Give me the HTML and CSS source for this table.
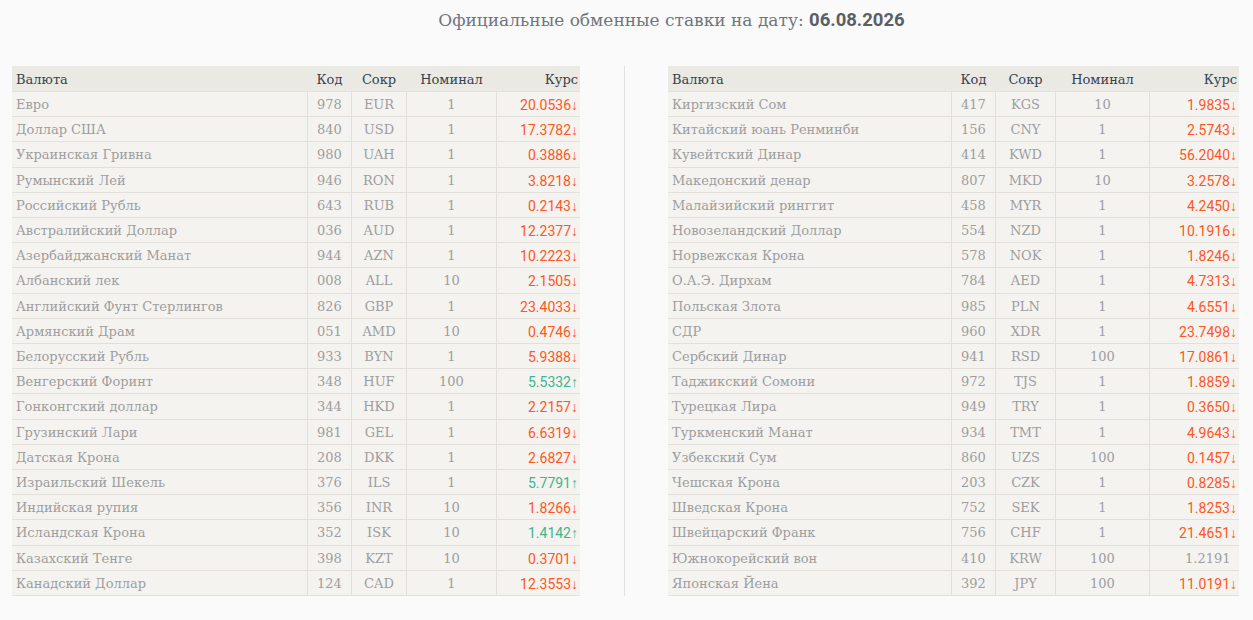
FILE: index.html
```html
<!DOCTYPE html>
<html lang="ru">
<head>
<meta charset="utf-8">
<title>Официальные обменные ставки</title>
<link rel="stylesheet" href="styles.css">
</head>
<body>
<h1 class="title">Официальные обменные ставки на дату: <b class="date">06.08.2026</b></h1>
<div class="tables">
  <table class="rates rates-left">
    <colgroup><col class="c-name"><col class="c-code"><col class="c-abbr"><col class="c-nom"><col class="c-rate"></colgroup>
    <thead><tr><th class="name">Валюта</th><th>Код</th><th>Сокр</th><th>Номинал</th><th class="rate">Курс</th></tr></thead>
    <tbody>
      <tr><td class="name">Евро</td><td>978</td><td>EUR</td><td>1</td><td class="rate down">20.0536↓</td></tr>
      <tr><td class="name">Доллар США</td><td>840</td><td>USD</td><td>1</td><td class="rate down">17.3782↓</td></tr>
      <tr><td class="name">Украинская Гривна</td><td>980</td><td>UAH</td><td>1</td><td class="rate down">0.3886↓</td></tr>
      <tr><td class="name">Румынский Лей</td><td>946</td><td>RON</td><td>1</td><td class="rate down">3.8218↓</td></tr>
      <tr><td class="name">Российский Рубль</td><td>643</td><td>RUB</td><td>1</td><td class="rate down">0.2143↓</td></tr>
      <tr><td class="name">Австралийский Доллар</td><td>036</td><td>AUD</td><td>1</td><td class="rate down">12.2377↓</td></tr>
      <tr><td class="name">Азербайджанский Манат</td><td>944</td><td>AZN</td><td>1</td><td class="rate down">10.2223↓</td></tr>
      <tr><td class="name">Албанский лек</td><td>008</td><td>ALL</td><td>10</td><td class="rate down">2.1505↓</td></tr>
      <tr><td class="name">Английский Фунт Стерлингов</td><td>826</td><td>GBP</td><td>1</td><td class="rate down">23.4033↓</td></tr>
      <tr><td class="name">Армянский Драм</td><td>051</td><td>AMD</td><td>10</td><td class="rate down">0.4746↓</td></tr>
      <tr><td class="name">Белорусский Рубль</td><td>933</td><td>BYN</td><td>1</td><td class="rate down">5.9388↓</td></tr>
      <tr><td class="name">Венгерский Форинт</td><td>348</td><td>HUF</td><td>100</td><td class="rate up">5.5332↑</td></tr>
      <tr><td class="name">Гонконгский доллар</td><td>344</td><td>HKD</td><td>1</td><td class="rate down">2.2157↓</td></tr>
      <tr><td class="name">Грузинский Лари</td><td>981</td><td>GEL</td><td>1</td><td class="rate down">6.6319↓</td></tr>
      <tr><td class="name">Датская Крона</td><td>208</td><td>DKK</td><td>1</td><td class="rate down">2.6827↓</td></tr>
      <tr><td class="name">Израильский Шекель</td><td>376</td><td>ILS</td><td>1</td><td class="rate up">5.7791↑</td></tr>
      <tr><td class="name">Индийская рупия</td><td>356</td><td>INR</td><td>10</td><td class="rate down">1.8266↓</td></tr>
      <tr><td class="name">Исландская Крона</td><td>352</td><td>ISK</td><td>10</td><td class="rate up">1.4142↑</td></tr>
      <tr><td class="name">Казахский Тенге</td><td>398</td><td>KZT</td><td>10</td><td class="rate down">0.3701↓</td></tr>
      <tr><td class="name">Канадский Доллар</td><td>124</td><td>CAD</td><td>1</td><td class="rate down">12.3553↓</td></tr>
    </tbody>
  </table>
  <div class="divider"></div>
  <table class="rates rates-right">
    <colgroup><col class="c-name"><col class="c-code"><col class="c-abbr"><col class="c-nom"><col class="c-rate"></colgroup>
    <thead><tr><th class="name">Валюта</th><th>Код</th><th>Сокр</th><th>Номинал</th><th class="rate">Курс</th></tr></thead>
    <tbody>
      <tr><td class="name">Киргизский Сом</td><td>417</td><td>KGS</td><td>10</td><td class="rate down">1.9835↓</td></tr>
      <tr><td class="name">Китайский юань Ренминби</td><td>156</td><td>CNY</td><td>1</td><td class="rate down">2.5743↓</td></tr>
      <tr><td class="name">Кувейтский Динар</td><td>414</td><td>KWD</td><td>1</td><td class="rate down">56.2040↓</td></tr>
      <tr><td class="name">Македонский денар</td><td>807</td><td>MKD</td><td>10</td><td class="rate down">3.2578↓</td></tr>
      <tr><td class="name">Малайзийский ринггит</td><td>458</td><td>MYR</td><td>1</td><td class="rate down">4.2450↓</td></tr>
      <tr><td class="name">Новозеландский Доллар</td><td>554</td><td>NZD</td><td>1</td><td class="rate down">10.1916↓</td></tr>
      <tr><td class="name">Норвежская Крона</td><td>578</td><td>NOK</td><td>1</td><td class="rate down">1.8246↓</td></tr>
      <tr><td class="name">О.А.Э. Дирхам</td><td>784</td><td>AED</td><td>1</td><td class="rate down">4.7313↓</td></tr>
      <tr><td class="name">Польская Злота</td><td>985</td><td>PLN</td><td>1</td><td class="rate down">4.6551↓</td></tr>
      <tr><td class="name">СДР</td><td>960</td><td>XDR</td><td>1</td><td class="rate down">23.7498↓</td></tr>
      <tr><td class="name">Сербский Динар</td><td>941</td><td>RSD</td><td>100</td><td class="rate down">17.0861↓</td></tr>
      <tr><td class="name">Таджикский Сомони</td><td>972</td><td>TJS</td><td>1</td><td class="rate down">1.8859↓</td></tr>
      <tr><td class="name">Турецкая Лира</td><td>949</td><td>TRY</td><td>1</td><td class="rate down">0.3650↓</td></tr>
      <tr><td class="name">Туркменский Манат</td><td>934</td><td>TMT</td><td>1</td><td class="rate down">4.9643↓</td></tr>
      <tr><td class="name">Узбекский Сум</td><td>860</td><td>UZS</td><td>100</td><td class="rate down">0.1457↓</td></tr>
      <tr><td class="name">Чешская Крона</td><td>203</td><td>CZK</td><td>1</td><td class="rate down">0.8285↓</td></tr>
      <tr><td class="name">Шведская Крона</td><td>752</td><td>SEK</td><td>1</td><td class="rate down">1.8253↓</td></tr>
      <tr><td class="name">Швейцарский Франк</td><td>756</td><td>CHF</td><td>1</td><td class="rate down">21.4651↓</td></tr>
      <tr><td class="name">Южнокорейский вон</td><td>410</td><td>KRW</td><td>100</td><td class="rate same">1.2191<span class="ghost">↓</span></td></tr>
      <tr><td class="name">Японская Йена</td><td>392</td><td>JPY</td><td>100</td><td class="rate down">11.0191↓</td></tr>
    </tbody>
  </table>
</div>
</body>
</html>
```
FILE: styles.css
```css
html, body {
  margin: 0;
  padding: 0;
  background: #fafafa;
}
body {
  font-family: "DejaVu Serif", serif;
  color: #9e9e9e;
}
.title {
  margin: 0;
  padding: 8px 0 0 90px;
  height: 58px;
  box-sizing: border-box;
  text-align: center;
  font-size: 17px;
  line-height: 24px;
  font-weight: normal;
  color: #6d7581;
}
.date {
  font-family: Roboto, "Liberation Sans", sans-serif;
  font-size: 18.5px;
  font-weight: bold;
  color: #5a5f66;
}
.tables {
  display: flex;
  align-items: stretch;
  padding: 8px 0 0 12px;
}
.divider {
  width: 1px;
  background: #e4e2de;
  margin: 0 43px 0 44px;
}
.rates {
  border-collapse: collapse;
  table-layout: fixed;
  font-size: 13px;
}
.rates-left { width: 568px; }
.rates-right { width: 571px; }
.rates-left .c-name { width: 295px; }
.rates-left .c-code { width: 44px; }
.rates-left .c-abbr { width: 55px; }
.rates-left .c-nom { width: 90px; }
.rates-left .c-rate { width: 84px; }
.rates-right .c-name { width: 283px; }
.rates-right .c-code { width: 44px; }
.rates-right .c-abbr { width: 60px; }
.rates-right .c-nom { width: 94px; }
.rates-right .c-rate { width: 90px; }
.rates th {
  background: #ebe9e4;
  color: #37434e;
  font-weight: normal;
  text-align: center;
  padding: 3px 3px 1px 4px;
  line-height: 21px;
  border-bottom: 1px solid #e6e3de;
}
.rates td {
  background: #f4f3f0;
  text-align: center;
  padding: 3px 3px 1px 4px;
  line-height: 20.2px;
  border-bottom: 1px solid #e3e0db;
  border-left: 1px solid #e3e0db;
  white-space: nowrap;
}
.rates td.name,
.rates th.name {
  text-align: left;
  border-left: none;
}
.rates td.rate,
.rates th.rate {
  text-align: right;
  padding-right: 2px;
}
.rate.down,
.rate.up {
  font-family: Roboto, "Liberation Sans", sans-serif;
  font-size: 14px;
}
.rate.down { color: #ff5722; }
.rate.up { color: #3db58e; }
.rate.same { color: #9e9e9e; }
.ghost { visibility: hidden; font-family: Roboto, sans-serif; }
```
